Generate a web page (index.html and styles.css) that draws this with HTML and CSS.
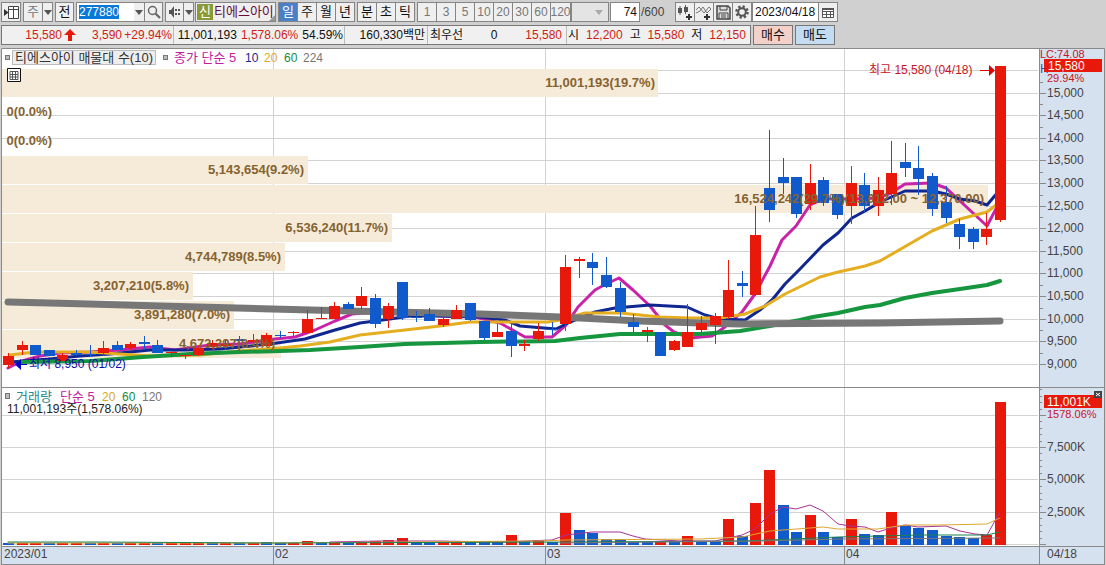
FILE: index.html
```html
<!DOCTYPE html>
<html lang="ko">
<head>
<meta charset="utf-8">
<title>티에스아이 차트</title>
<link rel="stylesheet" href="styles.css">
</head>
<body>
<header class="toolbar">
  <button class="btn" aria-label="창 전환"><svg width="15" height="13" viewBox="0 0 15 13"><path d="M4.500 .5h10v12h-10zM4.500 3.500h10M9.500 .5v12" fill="#fff" stroke="#444"/><path d="M0 3v7l4.500-3.500z" fill="#333"/></svg></button>
  <div class="group gap-s">
    <button class="btn dim">주</button><button class="btn drop" aria-label="주기 선택"><i class="caret"></i></button>
  </div>
  <button class="btn narrow gap-s">전</button>
  <div class="group gap-s">
    <label class="code"><input class="code-input" value="277880" aria-label="종목코드"></label>
    <button class="btn drop flat" aria-label="종목 목록"><i class="caret"></i></button>
    <button class="btn narrow" aria-label="검색"><svg width="14" height="14" viewBox="0 0 14 14"><circle cx="5.500" cy="5.500" r="4" fill="none" stroke="#666" stroke-width="1.500"/><path d="M8.500 8.500l4.500 4.500" stroke="#666" stroke-width="2.200"/></svg></button>
  </div>
  <div class="group gap-s">
    <button class="btn narrow" aria-label="소리"><svg width="14" height="12" viewBox="0 0 14 12"><path d="M1 4h2l3-4v12l-3-4h-2z" fill="#555"/><path d="M8 3v2M8 7v2M11 3v2M11 7v2" stroke="#555" stroke-width="2"/></svg></button><button class="btn drop" aria-label="소리 설정"><i class="caret"></i></button>
  </div>
  <div class="stock"><b class="tag">신</b><span class="stock-name">티에스아이</span><i class="corner"></i></div>
  <div class="group gap-s">
    <button class="btn active">일</button><button class="btn">주</button><button class="btn">월</button><button class="btn">년</button>
  </div>
  <div class="group gap-s">
    <button class="btn">분</button><button class="btn">초</button><button class="btn">틱</button>
  </div>
  <div class="group gap-s">
    <button class="btn num">1</button><button class="btn num">3</button><button class="btn num">5</button><button class="btn num">10</button><button class="btn num">20</button><button class="btn num">30</button><button class="btn num">60</button><button class="btn num wide">120</button>
  </div>
  <button class="btn period" aria-label="주기 목록" disabled><i class="caret pale"></i></button>
  <input class="count" value="74" aria-label="표시 봉 수"><span class="total">/600</span>
  <div class="group tools">
    <button class="btn" aria-label="봉 추가"><svg width="16" height="15" viewBox="0 0 16 15"><path d="M3 1v9M8.500 0v9" stroke="#555"/><path d="M1 3h4v5h-4zM7 2h4v5h-4z" fill="#555"/><path d="M9 12h6M12 9v6" stroke="#333" stroke-width="2"/></svg></button><button class="btn" aria-label="지표 추가"><svg width="16" height="15" viewBox="0 0 16 15"><path d="M0 5l3-3 5 6 5-6 2 2M0 8l4-2 3-4 4 6 4-4" fill="none" stroke="#777"/><path d="M8 12h6M11 9v6" stroke="#333" stroke-width="2"/></svg></button><button class="btn" aria-label="저장"><svg width="15" height="15" viewBox="0 0 15 15"><path d="M1 1h11l2 2v11h-13z" fill="#ddd" stroke="#444" stroke-width="1.500"/><path d="M4 1v4h7v-4M3 14v-6h9v6M5 10h5M5 12h5" fill="none" stroke="#444"/></svg></button><button class="btn" aria-label="설정"><svg width="14" height="14" viewBox="0 0 14 14"><circle cx="7" cy="7" r="5.500" fill="none" stroke="#555" stroke-width="2.500" stroke-dasharray="2.300 2"/><circle cx="7" cy="7" r="3.800" fill="none" stroke="#555" stroke-width="2"/></svg></button>
  </div>
  <div class="group">
    <input class="date" value="2023/04/18" aria-label="조회일"><button class="btn" aria-label="달력"><svg width="12" height="11" viewBox="0 0 12 11"><path d="M.5 1.500h11v9h-11zM.5 4.500h11M.5 7.500h11M4.500 4v7M8.500 4v7" fill="#fff" stroke="#555"/><path d="M0 1h12v2h-12z" fill="#555"/></svg></button>
  </div>
</header>
<section class="quote">
  <div class="prices">
    <div class="cell c-price up"><span class="w-price">15,580</span><svg class="arrow" width="12" height="12" viewBox="0 0 12 12"><path d="M6 0l6 6h-4v6h-4v-6h-4z" fill="#e8190a"/></svg><span class="w-diff">3,590</span><span class="w-rate">+29.94%</span></div>
    <div class="cell c-volume"><span>11,001,193</span><span class="up">1,578.06%</span><span>54.59%</span></div>
    <div class="cell c-amount">160,330백만</div>
    <div class="cell c-best"><span>최우선</span><span>0</span><span class="up">15,580</span></div>
    <div class="cell c-range"><span>시</span><span class="up">12,200</span><span>고</span><span class="up">15,580</span><span>저</span><span class="up">12,150</span></div>
  </div>
  <button class="order buy">매수</button>
  <button class="order sell">매도</button>
</section>
<main class="chart">
<svg class="canvas" viewBox="0 47 1106 518" role="img" aria-label="티에스아이 일봉 차트">
  <rect class="panel" x="1" y="48" width="1103" height="517"/>
  <rect class="axis-bg" x="1039" y="49" width="65" height="516"/>
  <rect class="axis-bg" x="2" y="546" width="1102" height="19"/>
  <g id="grid"></g>
  <g id="profile"></g>
  <g id="averages"></g>
  <g id="candles"></g>
  <g id="profile-labels" class="profile-text"></g>
  <g id="volumes"></g>
  <g id="volume-averages"></g>
  <path class="frame" d="M1.500 565v-516.500h1103v516.500M1.500 387.500h1103M1.500 546.500h1103M1.500 564.500h1103M1039.500 48v517M273.500 546v19M545.500 546v19M844.500 546v19"/>
  <g id="scale" class="label"></g>

  <rect class="bullet" x="5.500" y="55.500" width="4" height="4"/>
  <rect class="legend-box" x="12.500" y="50.500" width="143" height="14"/>
  <text class="legend" x="15" y="62">티에스아이 매물대 수(10)</text>
  <rect class="bullet" x="163.500" y="55.500" width="4" height="4"/>
  <text class="legend pink" x="174" y="62">종가 단순 5</text>
  <text class="label navy" x="245" y="62">10</text>
  <text class="label yellow" x="264" y="62">20</text>
  <text class="label green" x="284" y="62">60</text>
  <text class="label gray" x="303" y="62">224</text>
  <path d="M7.500 68.500h13v13h-13z" fill="#fff" stroke="#111"/>
  <path d="M10 71.500h8v8h-8zM10 74.500h8M10 77h8M12.500 71v8M15.500 71v8" fill="none" stroke="#555"/>

  <text class="note red" x="869" y="74">최고 15,580 (04/18)</text>
  <path d="M980 70.500h9" stroke="#e00000"/><path d="M989 65v11l6-5.500z" fill="#e00000"/>
  <path d="M21 364.500h6" stroke="#0000c8"/><path d="M21 359v11l-6-5.500z" fill="#0000c8"/>
  <text class="note blue" x="29" y="368">최저 8,950 (01/02)</text>

  <text class="note-small red" x="1040" y="58">LC:74.08</text>
  <text class="label blue-h" x="1040" y="73">H</text>
  <rect class="tag-bg" x="1044" y="59" width="58" height="13"/>
  <text class="label white" x="1048" y="70">15,580</text>
  <text class="note-small red" x="1047" y="82">29.94%</text>

  <rect class="bullet" x="5.500" y="393.500" width="4" height="5"/>
  <text class="legend teal" x="16" y="401">거래량</text>
  <text class="legend pink" x="60" y="401">단순 5</text>
  <text class="label yellow" x="102" y="401">20</text>
  <text class="label green" x="122" y="401">60</text>
  <text class="label gray" x="142" y="401">120</text>
  <text class="note" x="7" y="413">11,001,193주(1,578.06%)</text>
  <rect class="tag-bg" x="1044" y="395" width="58" height="13"/>
  <text class="label white" x="1047" y="406">11,001K</text>
  <rect x="1094" y="391" width="8" height="7" fill="#444"/><path d="M1096 393l4 3M1100 393l-4 3" stroke="#fff"/>
  <text class="note-small red" x="1047" y="418">1578.06%</text>

  <text class="label" x="4" y="558">2023/01</text>
  <text class="label" x="275" y="558">02</text>
  <text class="label" x="547" y="558">03</text>
  <text class="label" x="846" y="558">04</text>
  <text class="label" x="1047" y="558">04/18</text>
</svg>
</main>
<script src="chart.js"></script>
</body>
</html>
```

FILE: styles.css
```css
* { box-sizing: border-box; }
body {
  margin: 0;
  background: #d0d0d0;
  color: #111;
  font: 12px/16px "Liberation Sans", "Noto Sans CJK KR", sans-serif;
}
button, input { font: inherit; color: inherit; margin: 0; padding: 0; border-radius: 0; }

.toolbar { display: flex; align-items: center; height: 24px; padding: 2px 0 2px 1px; }
.group { display: flex; }
.btn {
  display: flex; align-items: center; justify-content: center; flex: none;
  width: 20px; height: 20px; margin-right: -1px;
  border: 1px solid #858585; background: #efefef; font-size: 13px;
}
.btn:last-child, .toolbar > .btn { margin-right: 0; }
.gap-s { margin-left: 2px; }
.narrow { width: 19px; }
.drop { width: 11px; }
.flat { border-left: 0; }
.dim { color: #777; }
.active { background: #4a80c6; color: #fff; }
.num { color: #777; font-size: 12px; }
.wide { width: 21px; }
.caret { border: 4px solid transparent; border-top: 5px solid #555; border-bottom: 0; }
.pale { border-top-color: #aaa; }
.code { display: flex; align-items: center; width: 58px; height: 20px; padding-left: 2px; border: 1px solid #858585; border-right: 0; background: #fff; }
.code-input { width: 40px; height: 14px; border: 0; background: #0a78d7; color: #fff; }
.stock { display: flex; align-items: center; position: relative; width: 81px; height: 20px; margin-left: 1px; border: 1px solid #858585; background: #efefef; }
.tag { width: 16px; height: 16px; margin: 0 1px; background: #8b9a35; color: #fff; font-size: 13px; font-weight: normal; text-align: center; }
.stock-name { color: #6a0a3c; font-size: 13px; white-space: nowrap; }
.corner { position: absolute; right: 0; bottom: 0; border: 3px solid #999; border-top-color: transparent; border-left-color: transparent; }
.period { width: 38px; justify-content: flex-end; padding-right: 5px; background: #e4e4e4; }
.count { width: 30px; height: 20px; margin-left: 1px; padding-right: 2px; border: 1px solid #858585; background: #fff; text-align: right; }
.total { width: 35px; padding-left: 1px; color: #444; }
.date { width: 66px; height: 20px; padding-left: 2px; border: 1px solid #858585; border-right: 0; background: #fff; }

.quote { display: flex; height: 23px; padding: 1px 0 2px 1px; gap: 2px; }
.prices { display: flex; width: 750px; border: 1px solid #777; background: #f0f0f0; }
.cell { display: flex; align-items: center; white-space: nowrap; border-right: 1px solid #bbb; }
.cell:last-child { border-right: 0; }
.up { color: #cf1d12; }
.c-price { width: 172px; }
.w-price { width: 60px; text-align: right; }
.arrow { margin-left: 2px; }
.w-diff { width: 46px; text-align: right; }
.w-rate { flex: 1; padding-right: 1px; text-align: right; }
.c-volume { width: 171px; justify-content: flex-end; gap: 4px; padding-right: 1px; }
.c-amount { width: 83px; justify-content: flex-end; padding-right: 2px; }
.c-best { width: 139px; justify-content: space-between; padding: 0 4px 0 2px; }
.c-range { flex: 1; justify-content: space-between; padding: 0 4px 0 1px; }
.order { width: 40px; height: 20px; border: 1px solid #777; font-size: 13px; }
.buy { background: #f4d0cb; }
.sell { background: #c4dcf2; }

.canvas { display: block; width: 100%; height: auto; }
.panel { fill: #fff; }
.axis-bg { fill: #d6e1ef; }
.frame { fill: none; stroke: #8a8a8a; }
.grid-line { stroke: #d2d2d2; fill: none; }
.tick { stroke: #8a8a8a; fill: none; }
.profile-bar { fill: #f6ead8; }
.profile-text { font-size: 13px; font-weight: bold; fill: #856330; text-anchor: end; }
.rise { fill: #e8190a; }
.fall { fill: #115acb; }
.line { fill: none; stroke-linejoin: round; stroke-linecap: round; }
.label { font-size: 12px; fill: #444; }
.note { font-size: 12px; fill: #222; }
.note-small { font-size: 11px; fill: #222; }
.legend { font-size: 13px; fill: #333; }
.legend-box { fill: #eee; stroke: #bbb; }
.bullet { fill: #bbb; stroke: #777; }
.pink { fill: #c0209f; }
.navy { fill: #14288c; }
.yellow { fill: #dca81e; }
.green { fill: #128a3c; }
.gray { fill: #777; }
.teal { fill: #2b8a8a; }
.red { fill: #c8141e; }
.blue { fill: #0c0ca8; }
.blue-h { fill: #115acb; }
.white { fill: #fff; }
.tag-bg { fill: #e8190a; }
```

FILE: chart.js
```javascript
const NS = "http://www.w3.org/2000/svg";
const FIRST_X = 8.5, LAST_X = 1000.5, BASE = 545;

function add(parent, tag, attrs, text) {
  const el = document.createElementNS(NS, tag);
  for (const key in attrs) el.setAttribute(key, attrs[key]);
  if (text !== undefined) el.textContent = text;
  document.getElementById(parent).appendChild(el);
}

// direction, high, body top, body bottom, low
const candles = `r 353 356 365 368;r 341 345 350 355;b 345 345 355 355;b 350 350 356 356;r 353 355 361 361;b 350 353 355 356
b 345 354 355 357;r 341 348 353 356;b 341 345 350 350;r 342 344 348 350;b 336 342 344 350;b 340 345 353 353
r 350 352 353 357;r 354 355 356 359;r 345 348 355 356;r 340 343 347 349;r 340 344 346 350;b 336 339 341 343
r 334 340 342 344;r 333 335 346 347;b 331 335 336 338;r 331 332 333 337;r 310 319 333 333;r 307 318 319 319
r 302 306 319 319;b 302 304 309 309;r 287 296 306 309;b 294 298 324 328;r 303 306 319 328;b 282 282 318 320
b 311 317 318 322;b 308 314 321 321;r 317 319 325 327;r 305 310 319 319;b 303 303 320 321;b 321 321 338 340
r 324 332 337 337;b 324 331 346 357;r 340 344 346 351;r 323 331 339 341;b 322 329 330 335;r 255 267 324 331
r 257 259 261 278;b 253 262 268 285;b 257 275 287 288;b 282 288 312 317;b 314 322 327 332;r 327 330 332 342
b 332 332 356 356;r 340 341 350 351;r 304 332 347 347;r 316 323 330 332;r 313 316 325 344;r 260 290 317 319
b 271 283 286 297;r 206 235 295 296;b 130 188 210 222;b 158 177 183 194;b 177 177 214 218;r 164 183 204 210
b 177 180 203 206;b 194 194 215 219;r 166 183 206 224;b 173 185 206 212;r 177 190 206 216;r 141 173 194 205
b 143 162 168 177;b 146 168 179 195;b 173 176 209 216;b 186 202 218 223;b 219 224 237 249;b 227 229 242 249
r 213 229 237 245;r 66 66 220 222`.split(/[;\n]/).map(row => row.split(" "));
const step = (LAST_X - FIRST_X) / (candles.length - 1);
const slotX = i => Math.round(FIRST_X + i * step - 0.5) - 5;

candles.forEach(([dir, high, top, bottom, low], i) => {
  const cls = dir === "r" ? "rise" : "fall", x = slotX(i);
  add("candles", "rect", { class: cls, x: x + 5, y: high, width: 1, height: low - high });
  add("candles", "rect", { class: cls, x, y: top, width: 11, height: bottom - top });
});

const volumeTops = [543,543,543,543,543,543,543,543,543,543,543,543,543,543,543,543,543,543,543,542,543,543,541,543,543,543,542,541,540,538,542,542,542,542,541,541,542,535,541,540,542,
  513,530,533,539,539,542,542,541,542,536,542,542,519,536,503,470,505,532,515,532,537,519,534,535,512,526,528,530,536,537,538,535,402];
const volumeDirs = "brrbrrbrbrrbrrrbrbrbbrrbrbrrrrbbrrbbbrbrbrbbbbbbrbrbbrbrrbbrbbrbbrbbbbbbrr";
volumeTops.forEach((y, i) => add("volumes", "rect", {
  class: volumeDirs[i] === "r" ? "rise" : "fall", x: slotX(i), y, width: 11, height: BASE - y
}));

// bar top, bar end, label end, label
[[69, 658, 655, "11,001,193(19.7%)"], [98, 2, 52, "0(0.0%)"], [127, 2, 52, "0(0.0%)"],
 [156, 308, 304, "5,143,654(9.2%)"], [185, 988, 984, "16,524,242(29.7%)(13,012.00 ~ 12,370.00)"],
 [214, 392, 388, "6,536,240(11.7%)"], [243, 285, 281, "4,744,789(8.5%)"],
 [272, 193, 189, "3,207,210(5.8%)"], [301, 234, 230, "3,891,280(7.0%)"], [330, 281, 275, "4,673,397(8.4%)"]
].forEach(([y, end, labelEnd, text]) => {
  add("profile", "rect", { class: "profile-bar", x: 2, y, width: end - 2, height: 28 });
  add("profile-labels", "text", { x: labelEnd, y: y + 18 }, text);
});

function line(parent, color, width, points) {
  add(parent, "polyline", { class: "line", stroke: color, "stroke-width": width, points });
}
line("averages", "#c822a8", 3, "8,368 22,361 40,356 60,353 90,352 120,350 150,347 175,350 210,345 240,344 275,339 295,337 315,330 335,321 352,314 375,312 400,312 440,316 475,317 500,323 525,337 552,337 566,325 578,307 595,290 606,284 619,278 633,290 650,306 665,325 674,332 690,338 712,336 725,327 742,312 755,294 770,266 782,240 796,226 810,205 823,199 850,199 878,198 891,193 905,184 932,183 946,188 960,201 987,226 998,205");
line("averages", "#102690", 3, "10,362 50,359 80,356 110,354 150,350 185,350 220,349 270,344 305,339 335,330 360,323 390,319 410,316 440,316 480,317 505,320 520,326 556,329 570,322 595,312 615,308 650,305 687,307 705,315 720,319 745,320 760,310 772,300 785,284 800,269 823,245 838,233 852,218 865,211 880,202 905,191 932,191 946,194 960,199 975,201 987,205 998,192");
line("averages", "#e4ae20", 3, "10,355 35,352 90,352 120,354 150,356 200,355 240,351 280,348 300,346 330,342 360,335 405,330 440,326 470,322 548,322 560,320 585,313 620,313 660,317 690,318 720,318 745,314 765,306 785,294 820,277 838,272 852,269 865,266 880,261 932,231 960,219 987,212 996,205 1000,203");
line("averages", "#16963e", 4, "20,362 90,361 143,357 190,354 240,352 280,351 310,350 360,347 405,344 480,342 555,341 580,338 620,334 700,334 740,331 770,326 800,320 813,317 838,313 865,307 880,305 905,298 932,293 960,289 987,285 1000,281");
line("averages", "#777777", 7, "8,302 90,304 160,306 272,309 350,311 480,314 560,317 640,321 700,323 740,324 880,323 1000,321");

line("volume-averages", "#a83298", 1, "330,542 380,541 440,541 500,542 552,540 566,535 592,532 620,532 633,536 645,539 680,541 715,541 728,538 742,535 755,529 770,514 783,507 796,509 810,505 823,511 838,524 850,526 865,527 878,532 891,528 905,525 918,527 946,526 960,531 975,534 987,535 1000,512");
line("volume-averages", "#dca632", 1, "8,543 270,543 540,541 566,540 700,539 742,537 770,531 823,527 838,529 878,529 905,525 940,525 987,524 1000,518");
line("volume-averages", "#1d8050", 1, "8,542 96,542 270,543 575,542 742,541 770,540 838,537 920,535 987,535 1000,532");
line("volume-averages", "#777777", 1, "560,543 760,541 840,539 1000,538");

// price scale
for (let k = 0; k <= 13; k++) {
  const price = 15500 - k * 500, y = Math.round(70 + k * 22.6) + 0.5;
  add("grid", "path", { class: "grid-line", d: `M2 ${y}H1038` });
  if (k > 0) {
    add("scale", "path", { class: "tick", d: `M1040 ${y}h6M1040 ${y - 11}h3` });
    add("scale", "text", { x: 1047, y: y + 3.5 }, price.toLocaleString("en-US"));
  }
}
// volume scale
[[415, ""], [447, "7,500K"], [479, "5,000K"], [512, "2,500K"], [544, ""]].forEach(([y, text]) => {
  add("grid", "path", { class: "grid-line", d: `M2 ${y + 0.5}H1038` });
  add("scale", "path", { class: "tick", d: `M1040 ${y + 0.5}h6` });
  for (let n = 1; n < 5; n++) add("scale", "path", { class: "tick", d: `M1040 ${Math.round(y - n * 6.4) + 0.5}h2` });
  if (text) add("scale", "text", { x: 1047, y: y + 4 }, text);
});
[273.5, 545.5, 844.5].forEach(x => add("grid", "path", { class: "grid-line", d: `M${x} 49V546` }));
```
